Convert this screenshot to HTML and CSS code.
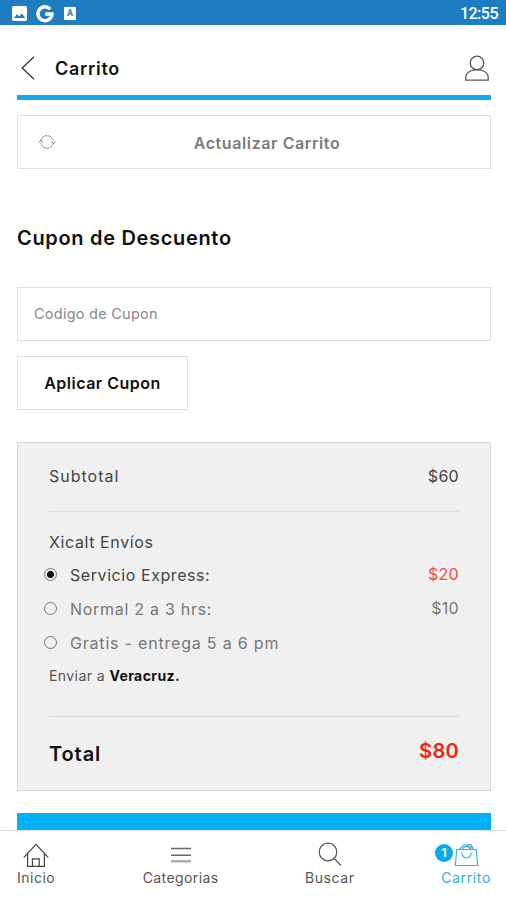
FILE: index.html
```html
<!DOCTYPE html>
<html lang="es">
<head>
<meta charset="utf-8">
<title>Carrito</title>
<link rel="stylesheet" href="styles.css">
</head>
<body>
<div class="screen">
  <div class="status">
    <svg class="s-image" viewBox="0 0 15 15"><rect width="15" height="15" rx="1.8" fill="#fff"/><path d="M2 12l3-4 2.2 2.5L10 7.5l3.2 4.5z" fill="#1d7dc0"/></svg>
    <svg class="s-google" viewBox="0 0 18 18"><path d="M14.2 4.1A7 7 0 1 0 16 9H9.2" fill="none" stroke="#fff" stroke-width="3.4"/></svg>
    <span class="s-letter">A</span>
    <span class="clock">12:55</span>
  </div>
  <header class="header">
    <svg class="back" viewBox="0 0 14 24"><path d="M13 .7L1.2 12 13 23.3" fill="none" stroke="#333" stroke-width="1.3"/></svg>
    <h1 class="title"><span>Carrito</span></h1>
    <svg class="user" viewBox="0 0 26 27"><g fill="none" stroke="#555" stroke-width="1.3"><circle cx="13" cy="8" r="6.8"/><path d="M9.2 13.8l1.8 1C5 15.5 1.8 18.8 1.8 22.5v2.6h22.4v-2.6c0-3.7-3.2-7-9.2-7.7l1.8-1"/></g></svg>
  </header>
  <main class="content">
    <button class="update">
      <svg class="refresh" viewBox="0 0 18 16"><g fill="none" stroke="#777" stroke-width="1"><path d="M2.7 7A6.4 6.4 0 0 1 15.3 7M15.3 9A6.4 6.4 0 0 1 2.7 9" stroke-dasharray="2.5 .8"/><path d="M.7 8.5l2-1.8 2 1.8M13.3 7.5l2 1.8 2-1.8"/></g></svg>
      <span class="update-text">Actualizar Carrito</span>
    </button>
    <h2 class="coupon-title"><span>Cupon de Descuento</span></h2>
    <div class="field"><span>Codigo de Cupon</span></div>
    <button class="apply"><span>Aplicar Cupon</span></button>
    <section class="summary">
      <div class="row subtotal"><span class="l-sub">Subtotal</span><span class="price">$60</span></div>
      <div class="shipping">
        <div class="row ship-title"><span>Xicalt Envíos</span></div>
        <div class="row option selected"><i class="radio"></i><span class="l-exp">Servicio Express:</span><span class="price red">$20</span></div>
        <div class="row option"><i class="radio"></i><span class="l-norm">Normal 2 a 3 hrs:</span><span class="price ten">$10</span></div>
        <div class="row option"><i class="radio"></i><span class="l-free">Gratis - entrega 5 a 6 pm</span></div>
        <div class="row dest"><span>Enviar a <b>Veracruz.</b></span></div>
      </div>
      <div class="row total"><span class="l-total">Total</span><span class="sum">$80</span></div>
    </section>
    <div class="checkout"></div>
  </main>
  <nav class="nav">
    <a class="tab home"><svg width="26" height="25" viewBox="0 0 26 25"><path d="M.8 15.4L13 2.4l12.2 13M4.6 11.6v12.8h16.8V11.6M9.4 24.4v-7.6h6.8v7.6" fill="none" stroke="#444" stroke-width="1.2"/></svg><span>Inicio</span></a>
    <a class="tab categories"><svg width="22" height="25" viewBox="0 0 22 25"><path d="M1 6.5h20M1 13.2h20" stroke="#666" stroke-width="1.4"/><path d="M1 19.3h20" stroke="#aaa" stroke-width="2.4"/></svg><span>Categorias</span></a>
    <a class="tab search"><svg width="24" height="25" viewBox="0 0 24 25"><g fill="none" stroke="#555" stroke-width="1.2"><circle cx="10" cy="10" r="8.8"/><path d="M16.3 16.5l6.7 7.2"/></g></svg><span>Buscar</span></a>
    <a class="tab cart"><div class="cart-icons"><i class="badge">1</i><svg width="25" height="25" viewBox="0 0 25 25"><g fill="none" stroke="#35adea" stroke-width="1.1"><path d="M2.8 7.5h19.4l1.5 16H1.3z"/><path d="M7.9 10.5v1.5c1 2.5 2.4 4 4.6 4s3.6-1.5 4.6-4v-1.5M5.5 7.2l5-4.8 6.5 4.8M8.3 6.8l5.2-4 5.5 4M13.8 3l3-.7 2.4 4.5"/></g></svg></div><span>Carrito</span></a>
  </nav>
</div>
</body>
</html>
```
FILE: styles.css
```css
* { box-sizing: border-box; }
body { margin: 0; background: #fff; font-family: Inter, "Liberation Sans", sans-serif; color: #222; }
.screen { width: 506px; height: 900px; display: flex; flex-direction: column; overflow: hidden; }
svg { display: block; flex: none; }
span { white-space: nowrap; }
button { font: inherit; background: #fff; margin: 0; padding: 0; }
.status { flex: none; height: 25px; background: #1d7dc0; display: flex; align-items: center; padding: 2px 8px 0 12px; color: #fff; }
.s-image { width: 15px; height: 15px; }
.s-google { width: 18px; height: 18px; margin-left: 9px; }
.s-letter { width: 12px; height: 13px; margin-left: 10px; border-radius: 1px; background: #fff; color: #1d7dc0; font: bold 9px/13px Roboto, sans-serif; text-align: center; }
.clock { margin-left: auto; font: 500 16px/20px Roboto, sans-serif; letter-spacing: -.5px; }
.header { flex: none; height: 75px; margin: 0 15px 0 17px; border-bottom: 5px solid #0fabf3; display: flex; align-items: center; padding: 16px 1px 0 4px; }
.back { width: 14px; height: 24px; }
.title { margin: 0 0 0 20px; padding-top: 1px; font-size: 18px; line-height: 24px; font-weight: 600; letter-spacing: .7px; color: #111; }
.user { width: 26px; height: 27px; margin-left: auto; }
.content { flex: 1; min-height: 0; overflow: hidden; padding: 15px 15px 0 17px; display: flex; flex-direction: column; align-items: stretch; }
.content > * { flex: none; }
.update { height: 54px; border: 1px solid #dedede; display: flex; align-items: center; padding: 0 0 0 20px; }
.refresh { width: 18px; height: 16px; }
.update-text { flex: 1; text-align: center; padding: 2px 12px 0 0; font-size: 16px; line-height: 24px; font-weight: 600; color: #7b7b7b; letter-spacing: .6px; }
.coupon-title { margin: 54px 0 34px; font-size: 20px; line-height: 30px; font-weight: 600; color: #111; letter-spacing: .68px; }
.field { height: 54px; border: 1px solid #e0e0e0; padding: 0 16px 2px; display: flex; align-items: center; font-size: 14.5px; color: #888; font-weight: 400; letter-spacing: .25px; }
.apply { width: 171px; height: 54px; margin-top: 15px; border: 1px solid #e0e0e0; font-size: 16px; font-weight: 600; color: #111; letter-spacing: .5px; }
.summary { margin-top: 32px; height: 349px; border: 1px solid #d8d8d8; background: #f0f0f0; padding: 0 31px; color: #444; font-size: 16px; }
.row { display: flex; align-items: center; }
.price, .sum { margin-left: auto; letter-spacing: .3px; }
.subtotal { height: 69px; border-bottom: 1px solid #dfdfdf; padding-bottom: 2px; }
.l-sub { letter-spacing: 1px; }
.shipping { height: 205px; border-bottom: 1px solid #dcdcdc; padding-top: 14px; }
.ship-title { height: 32px; letter-spacing: .6px; }
.option { height: 34px; margin-left: -5px; color: #777; }
.selected { color: #444; }
.l-exp { letter-spacing: .57px; }
.l-norm { letter-spacing: .72px; }
.l-free { letter-spacing: .8px; }
.option .price { padding-bottom: 2px; }
.radio { width: 13px; height: 13px; border: 1px solid #777; border-radius: 50%; margin: -2px 13px 0 0; flex: none; }
.selected .radio { background: radial-gradient(circle, #111 0 3.2px, transparent 3.8px); }
.dest { height: 30px; font-size: 14px; color: #555; letter-spacing: .42px; }
.dest b { color: #111; font-weight: 700; }
.option .red { color: #ef4a46; }
.total { height: 74px; font-size: 20px; font-weight: 600; color: #111; }
.l-total { letter-spacing: .9px; }
.sum { color: #f51f0c; padding-bottom: 7px; }
.checkout { height: 30px; background: #00b0fa; margin-top: 22px; }
.nav { flex: none; height: 70px; border-top: 1px solid #e0e0e0; background: #fff; display: flex; justify-content: space-between; padding: 11px 15px 0 17px; }
.tab { display: flex; flex-direction: column; align-items: center; font-size: 14px; line-height: 22px; color: #555; letter-spacing: .4px; }
.home { letter-spacing: .5px; }
.categories { margin-left: 1px; }
.search { letter-spacing: .55px; }
.cart { align-items: flex-end; color: #35adea; letter-spacing: .65px; }
.cart-icons { display: flex; padding-right: 12px; margin-left: -6px; }
.badge { width: 18px; height: 18px; border-radius: 50%; background: #08a9ef; color: #fff; font: bold 12px/18px Inter, sans-serif; letter-spacing: 0; text-align: center; margin: 2px 1px 0 0; }
```
